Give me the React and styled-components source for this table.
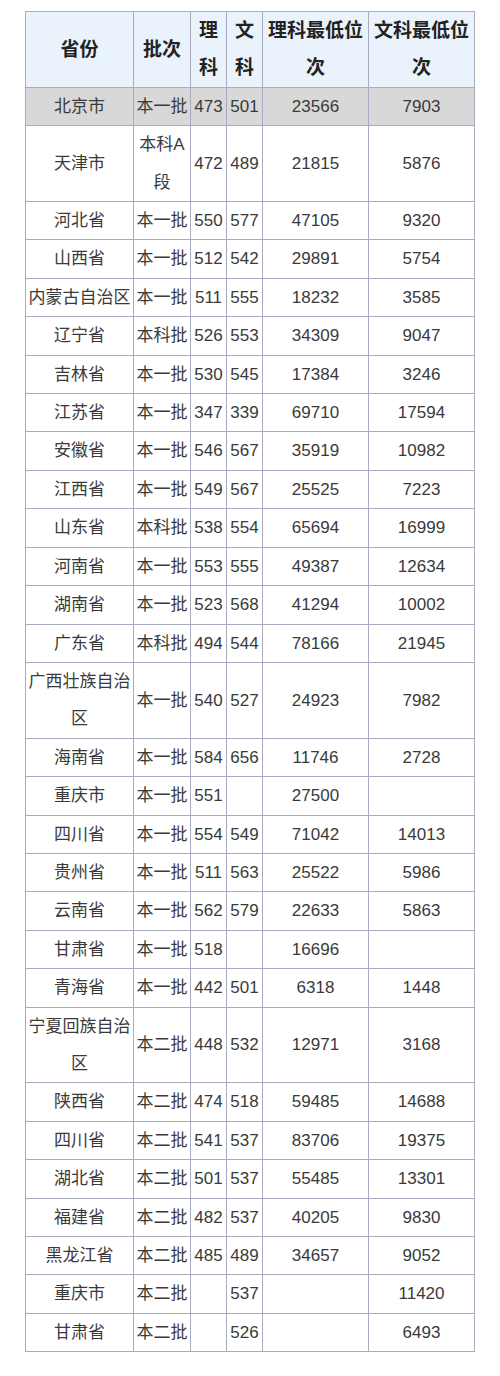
import React from 'react'
import styled, { createGlobalStyle } from "styled-components";

const rows = [
  ["北京市", "本一批", "473", "501", "23566", "7903", true],
  ["天津市", "本科A段", "472", "489", "21815", "5876"],
  ["河北省", "本一批", "550", "577", "47105", "9320"],
  ["山西省", "本一批", "512", "542", "29891", "5754"],
  ["内蒙古自治区", "本一批", "511", "555", "18232", "3585"],
  ["辽宁省", "本科批", "526", "553", "34309", "9047"],
  ["吉林省", "本一批", "530", "545", "17384", "3246"],
  ["江苏省", "本一批", "347", "339", "69710", "17594"],
  ["安徽省", "本一批", "546", "567", "35919", "10982"],
  ["江西省", "本一批", "549", "567", "25525", "7223"],
  ["山东省", "本科批", "538", "554", "65694", "16999"],
  ["河南省", "本一批", "553", "555", "49387", "12634"],
  ["湖南省", "本一批", "523", "568", "41294", "10002"],
  ["广东省", "本科批", "494", "544", "78166", "21945"],
  ["广西壮族自治区", "本一批", "540", "527", "24923", "7982"],
  ["海南省", "本一批", "584", "656", "11746", "2728"],
  ["重庆市", "本一批", "551", "", "27500", ""],
  ["四川省", "本一批", "554", "549", "71042", "14013"],
  ["贵州省", "本一批", "511", "563", "25522", "5986"],
  ["云南省", "本一批", "562", "579", "22633", "5863"],
  ["甘肃省", "本一批", "518", "", "16696", ""],
  ["青海省", "本一批", "442", "501", "6318", "1448"],
  ["宁夏回族自治区", "本二批", "448", "532", "12971", "3168"],
  ["陕西省", "本二批", "474", "518", "59485", "14688"],
  ["四川省", "本二批", "541", "537", "83706", "19375"],
  ["湖北省", "本二批", "501", "537", "55485", "13301"],
  ["福建省", "本二批", "482", "537", "40205", "9830"],
  ["黑龙江省", "本二批", "485", "489", "34657", "9052"],
  ["重庆市", "本二批", "", "537", "", "11420"],
  ["甘肃省", "本二批", "", "526", "", "6493"],
];

const widths = [108, 57, 36, 36, 106, 106];
const heads = ["省份", "批次", "理科", "文科", "理科最低位次", "文科最低位次"];

const App = () => {
  return (
    <Page>
      <GlobalStyle />
      <Table>
        <colgroup>
          {widths.map((w, i) => <col key={i} style={{ width: w }} />)}
        </colgroup>
        <thead>
          <tr>
            {heads.map((h) => <Th key={h}>{h}</Th>)}
          </tr>
        </thead>
        <tbody>
          {rows.map((r, i) => (
            <Row key={i} $shade={r[6]}>
              {r.slice(0, 6).map((c, j) => <Td key={j}>{c}</Td>)}
            </Row>
          ))}
        </tbody>
      </Table>
    </Page>
  )
}

export default App

const GlobalStyle = createGlobalStyle`
  body {
    margin: 0;
    background: #ffffff;
    font-family: "Liberation Sans", "Noto Sans CJK SC", sans-serif;
  }
`
const Page = styled.div`
  padding: 11px 0 26px 25px;
`
const Table = styled.table`
  border-collapse: collapse;
  table-layout: fixed;
  width: 449px;
  border: 1px solid #a9a9bf;
`
const Th = styled.th`
  background-color: #eaf3fc;
  color: #222;
  font-size: 19px;
  font-weight: 700;
  line-height: 37.4px;
  padding: 0;
  text-align: center;
  border: 1px solid #a9a9bf;
  word-break: break-all;
`
const Row = styled.tr`
  background-color: ${(p) => (p.$shade ? "#d8d8d8" : "#ffffff")};
`
const Td = styled.td`
  color: #3a3a3a;
  font-size: 17px;
  line-height: 37.4px;
  padding: 0;
  text-align: center;
  border: 1px solid #a9a9bf;
  word-break: break-all;
`
